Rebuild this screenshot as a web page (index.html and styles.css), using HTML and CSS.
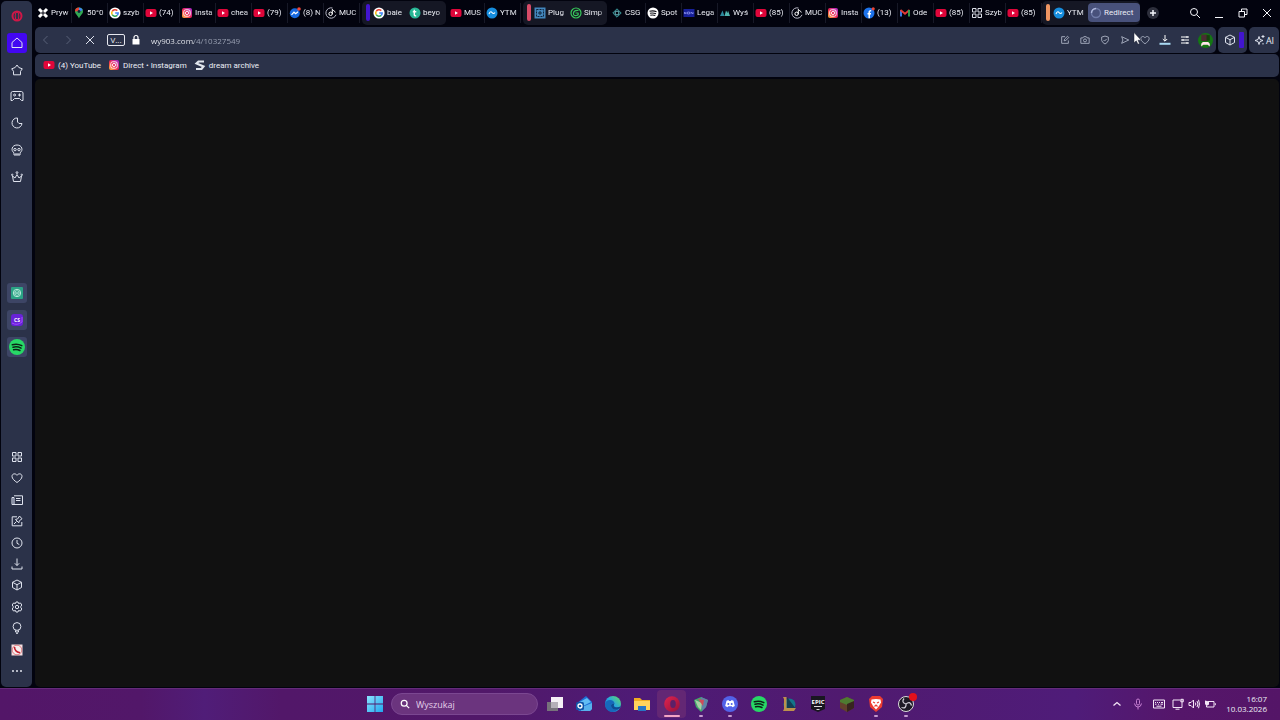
FILE: index.html
```html
<!DOCTYPE html>
<html lang="pl">
<head>
    <meta charset="UTF-8">
    <meta name="viewport" content="width=device-width, initial-scale=1.0">
    <title>Redirect</title>
    <link rel="stylesheet" href="styles.css">
</head>
<body>
    <!-- Shared icons -->
    <svg class="sprite" aria-hidden="true">
        <defs>
            <linearGradient id="insta-bg" x1="0" y1="1" x2="1" y2="0">
                <stop offset="0" stop-color="#ffc23c"/>
                <stop offset=".45" stop-color="#f0254f"/>
                <stop offset="1" stop-color="#a52bd8"/>
            </linearGradient>
            <linearGradient id="edge-bg" x1="0" y1="1" x2="1" y2="0">
                <stop offset="0" stop-color="#1565c8"/>
                <stop offset=".5" stop-color="#27a5e0"/>
                <stop offset="1" stop-color="#64e060"/>
            </linearGradient>
            <linearGradient id="opera-bg" x1="0" y1="0" x2="1" y2="1">
                <stop offset="0" stop-color="#e0244f"/>
                <stop offset="1" stop-color="#96103c"/>
            </linearGradient>
            <linearGradient id="win-bg" x1="0" y1="0" x2="1" y2="1">
                <stop offset="0" stop-color="#8be4ff"/>
                <stop offset="1" stop-color="#22a7ee"/>
            </linearGradient>
        </defs>
        <symbol id="youtube" viewBox="0 0 12 12">
            <rect x=".5" y="2" width="11" height="8" rx="2" fill="#e0063a"/>
            <path d="M5 4.3 8 6 5 7.7z" fill="#fff"/>
        </symbol>
        <symbol id="instagram" viewBox="0 0 12 12">
            <rect x="1" y="1" width="10" height="10" rx="2" fill="url(#insta-bg)"/>
            <rect x="2.8" y="2.8" width="6.4" height="6.4" rx="1.8" fill="none" stroke="#fff" stroke-width=".9"/>
            <circle cx="6" cy="6" r="1.6" fill="none" stroke="#fff" stroke-width=".9"/>
            <circle cx="8" cy="4" r=".5" fill="#fff"/>
        </symbol>
        <symbol id="google" viewBox="0 0 12 12">
            <circle cx="6" cy="6" r="5.6" fill="#fff"/>
            <path d="M8.3 3.6A3.3 3.3 0 0 0 3.2 4.3" fill="none" stroke="#ea4335" stroke-width="1.5"/>
            <path d="M3.2 4.3a3.3 3.3 0 0 0 0 3.4" fill="none" stroke="#fbbc05" stroke-width="1.5"/>
            <path d="M3.2 7.7a3.3 3.3 0 0 0 5 .7" fill="none" stroke="#34a853" stroke-width="1.5"/>
            <path d="M8.2 8.4A3.3 3.3 0 0 0 9.2 6H6.2" fill="none" stroke="#4285f4" stroke-width="1.5"/>
        </symbol>
        <symbol id="note" viewBox="0 0 12 12">
            <path d="M7.5 1A5.200 5.200 0 1 0 11 7.800" fill="none" stroke="#b9bac8" stroke-width="1"/>
            <circle cx="5.600" cy="6.800" r="1.700" fill="none" stroke="#fff" stroke-width="1"/>
            <path d="M7.300 7V2.300c.5 1.400 2.600 1.300 3 3.200" fill="none" stroke="#fff" stroke-width="1"/>
        </symbol>
        <symbol id="converter" viewBox="0 0 12 12">
            <circle cx="6" cy="6" r="5.5" fill="#168ddd"/>
            <path d="M3 7q1.500-3.500 3-1.500t3 0" fill="none" stroke="#fff" stroke-width="1.100"/>
        </symbol>
        <symbol id="spotify" viewBox="0 0 16 16">
            <circle cx="8" cy="8" r="8" fill="#27d866"/>
            <path d="M3.300 5.800q5-1.500 9.500.900M4 8.300q4.200-1.200 8 .900M4.600 10.700q3.500-.900 6.300.800" fill="none" stroke="#0b2316" stroke-width="1.500" stroke-linecap="round"/>
        </symbol>
        <symbol id="cube" viewBox="0 0 12 12">
            <path d="M6 1l4.500 2.300v5.200L6 11 1.500 8.500V3.300zM1.500 3.300 6 5.700l4.500-2.400M6 5.700V11"/>
        </symbol>
        <symbol id="heart" viewBox="0 0 12 12">
            <path d="M6 10.500C3.500 8.700 1 6.800 1 4.300 1 1.500 4.600 1 6 3.300 7.400 1 11 1.500 11 4.300c0 2.500-2.500 4.400-5 6.200z"/>
        </symbol>
        <symbol id="grid" viewBox="0 0 12 12">
            <path d="M1.500 1.500h3.500V5H1.500zM7 1.500h3.500V5H7zM1.500 7h3.500v3.500H1.500zM7 7h3.500v3.500H7z"/>
        </symbol>
        <symbol id="search" viewBox="0 0 12 12">
            <circle cx="5" cy="5" r="3.500"/><path d="M7.600 7.600 11 11"/>
        </symbol>
    </svg>

    <div class="browser">
        <!-- Sidebar -->
        <nav class="sidebar" aria-label="Pasek boczny">
            <div class="side-group side-top">
                <button class="side-btn" aria-label="Opera GX"><svg viewBox="0 0 12 12"><ellipse cx="6" cy="6" rx="4.500" ry="4.500" stroke="#cf1747" stroke-width="2"/><ellipse cx="6" cy="6" rx="1.800" ry="4" stroke="#cf1747"/></svg></button>
                <button class="side-btn current" aria-label="Start"><svg viewBox="0 0 12 12"><path d="M1 5.500 6 1l5 4.500V10.500H1z"/></svg></button>
                <button class="side-btn" aria-label="Kącik GX"><svg viewBox="0 0 12 12"><path d="M6 1l1.800 2.500L11.300 4.800 9.500 7.300v3.500h-7V7.300L.700 4.800l3.500-1.300z"/></svg></button>
                <button class="side-btn" aria-label="Gry"><svg class="wide" viewBox="0 0 14 12"><path d="M2.500 1.500h9l1.500 1v8h-1.500L9.500 8.500h-5L2.500 10.500H1v-8z"/><circle cx="4.600" cy="5" r="1"/><path d="M8 5h3M9.500 3.500v3"/></svg></button>
                <button class="side-btn" aria-label="GX Control"><svg viewBox="0 0 12 12"><path d="M6.500 1A5 5 0 1 0 11 6.500H8L6.500 5z"/></svg></button>
                <button class="side-btn" aria-label="GX Mods"><svg viewBox="0 0 12 12"><path d="M3 8.800C-.500 6.500.800 1 6 1s6.500 5.500 3 7.800V11H3zM5 9v2M7 9v2"/><circle cx="4" cy="5.600" r="1.200"/><circle cx="8" cy="5.600" r="1.200"/></svg></button>
                <button class="side-btn" aria-label="Korona"><svg viewBox="0 0 12 12"><path d="M1.500 5 2.500 10.500h7L10.500 5 8 7 6 3.500 4 7z"/><circle cx="1.200" cy="3.800" r=".700"/><circle cx="6" cy="1.600" r=".900"/><circle cx="10.800" cy="3.800" r=".700"/></svg></button>
            </div>
            <div class="side-group side-apps">
                <button class="side-btn app" aria-label="ChatGPT"><svg viewBox="0 0 12 12"><rect width="12" height="12" rx="1" fill="#2ba385" stroke="none"/><circle cx="6" cy="6" r="3.700" stroke="#b8eadb"/><path d="M6 3.500 8.200 4.800v2.500L6 8.500 3.800 7.300V4.800zM3.800 4.800 8.200 7.300M8.200 4.800 3.800 7.300" stroke="#b8eadb" stroke-width=".700"/></svg></button>
                <button class="side-btn app" aria-label="CS"><svg class="wide" viewBox="0 0 12 12"><rect width="12" height="12" rx="3" fill="#6822d8" stroke="none"/><path d="M1 9q5 3 10-1V3" stroke="#a44cff"/><text class="app-mark" x="6" y="8" text-anchor="middle">CS</text></svg></button>
                <button class="side-btn app" aria-label="Spotify"><svg class="full"><use href="#spotify"/></svg></button>
            </div>
            <div class="side-group side-bottom">
                <button class="side-btn" aria-label="Karty"><svg><use href="#grid"/></svg></button>
                <button class="side-btn" aria-label="Ulubione"><svg><use href="#heart"/></svg></button>
                <button class="side-btn" aria-label="Aktualności"><svg viewBox="0 0 12 12"><path d="M1 3.500h2v7H1zM3 1.800h8.500v8.700H1.500M5 4.500h4.500M5 6.500h4.500"/><path d="M.700 4h3v6h-3z" fill="#8d93a8" stroke="none"/></svg></button>
                <button class="side-btn" aria-label="Pinboardy"><svg viewBox="0 0 12 12"><path d="M6 1.800H1.200v9h9.600V7M3 9l2.500-2.500M4.500 4.500l3.300 3.300.500-2 2.700-2L8.500 1 6.800 3.800z"/></svg></button>
                <button class="side-btn" aria-label="Historia"><svg viewBox="0 0 12 12"><circle cx="6" cy="6" r="5"/><path d="M6 3v3.300L8.300 7.500"/></svg></button>
                <button class="side-btn" aria-label="Pobrane"><svg viewBox="0 0 12 12"><path d="M6 .500v7M3.800 5.300 6 7.500l2.200-2.200M1 8.500V11h10V8.500"/></svg></button>
                <button class="side-btn" aria-label="Rozszerzenia"><svg><use href="#cube"/></svg></button>
                <button class="side-btn" aria-label="Ustawienia"><svg viewBox="0 0 12 12"><path d="M5 1h2l.500 1.500L9.500 2l1.300 2-1 1.500v1l1 1.500-1.300 2-2-.500L7 11H5l-.500-1.500-2 .500-1.300-2 1-1.500v-1l-1-1.500 1.300-2 2 .500z"/><circle cx="6" cy="6" r="1.700"/></svg></button>
                <button class="side-btn" aria-label="Wskazówki"><svg viewBox="0 0 12 12"><circle cx="6" cy="4.500" r="3.900"/><path d="M4.500 8.300V10h3V8.300M5 11.300h2"/></svg></button>
                <button class="side-btn" aria-label="Telefon"><svg viewBox="0 0 12 12"><path d="M.500.500h11v11H.500z" fill="#f5dfe1" stroke="none"/><circle cx="6" cy="6" r="4.800" fill="#f6eeee" stroke="#d6525a" stroke-width=".700"/><path d="M3.500 3q0 4.500 5.500 5.800" stroke="#c6202e" stroke-width="1.600"/></svg></button>
                <button class="side-btn" aria-label="Więcej"><svg viewBox="0 0 12 12"><g fill="#e2e5ee" stroke="none"><circle cx="2" cy="6" r="1"/><circle cx="6" cy="6" r="1"/><circle cx="10" cy="6" r="1"/></g></svg></button>
            </div>
        </nav>

        <div class="main">
            <!-- Tab strip -->
            <div class="tabstrip">
                <button class="tab"><svg viewBox="0 0 12 12"><path d="M2 2l8 8M10 2l-8 8" stroke="#fff" stroke-width="3"/><path d="M6 4v4M4 6h4" stroke="#02030e"/></svg><span>Pryw</span></button>
                <button class="tab"><svg viewBox="0 0 12 12"><path d="M6 11.500C5 8.500 2 7 2 4.500a4 4 0 0 1 8 0C10 7 7 8.500 6 11.500z" fill="#31a853"/><path d="M2 4.500A4 4 0 0 1 6 .500V4z" fill="#e84335"/><path d="M6 .500a4 4 0 0 1 3.700 2.500L6 5z" fill="#4285f4"/><circle cx="6" cy="4.500" r="1.400" fill="#10223a"/></svg><span>50°0</span></button>
                <button class="tab"><svg><use href="#google"/></svg><span>szyb</span></button>
                <button class="tab"><svg><use href="#youtube"/></svg><span>(74)</span></button>
                <button class="tab"><svg><use href="#instagram"/></svg><span>Insta</span></button>
                <button class="tab"><svg><use href="#youtube"/></svg><span>chea</span></button>
                <button class="tab"><svg><use href="#youtube"/></svg><span>(79)</span></button>
                <button class="tab"><svg viewBox="0 0 12 12"><circle cx="5.800" cy="6.200" r="5" fill="#1769df"/><path d="M2.500 7.800 5 5.200l1.700 1.500L9 4.800" fill="none" stroke="#fff" stroke-width="1.200"/><circle cx="10" cy="2" r="1.800" fill="#ee4538"/></svg><span>(8) N</span></button>
                <button class="tab"><svg><use href="#note"/></svg><span>MUC</span></button>

                <div class="tab-group">
                    <i class="mark violet"></i>
                    <button class="tab"><svg><use href="#google"/></svg><span>baie</span></button>
                    <button class="tab"><svg viewBox="0 0 12 12"><circle cx="6" cy="6" r="5.500" fill="#28b695"/><path d="M5.300 2.800v5q0 1.200 1.900 1M3.800 4.700h3.500" fill="none" stroke="#fff" stroke-width="1.400"/></svg><span>beyo</span></button>
                </div>

                <button class="tab"><svg><use href="#youtube"/></svg><span>MUS</span></button>
                <button class="tab"><svg><use href="#converter"/></svg><span>YTM</span></button>

                <div class="tab-group">
                    <i class="mark pink"></i>
                    <button class="tab"><svg viewBox="0 0 12 12"><path d="M.500.500h11v11H.500z" fill="#4387bd"/><path d="M2.500 2.500h7v7h-7z" fill="none" stroke="#10243c" stroke-dasharray="2 1"/><path d="M6 4v4M4 6h4" stroke="#10243c"/></svg><span>Plug</span></button>
                    <button class="tab"><svg viewBox="0 0 12 12" fill="none" stroke="#38c75b" stroke-width="1.200"><circle cx="6" cy="6" r="5"/><path d="M8.500 3.500Q4 3 3.500 6t3 2.500Q9 8 8 6H5.500"/></svg><span>Simp</span></button>
                </div>

                <button class="tab"><svg viewBox="0 0 12 12" fill="none" stroke="#3b9da0"><path d="M6 1.800 10.200 6 6 10.200 1.800 6z"/><circle cx="6" cy="6" r="2" stroke="#77cbd1"/></svg><span>CSG</span></button>
                <button class="tab"><svg viewBox="0 0 12 12"><circle cx="6" cy="6" r="5.500" fill="#fff"/><path d="M2.500 4.300q4-1 7 .500M3 6.300q3-.800 6 .500M3.300 8.200q3-.600 5 .400" fill="none" stroke="#101018" stroke-width="1.100"/></svg><span>Spot</span></button>
                <button class="tab"><svg viewBox="0 0 12 12"><path d="M.500 2h11v8H.500z" fill="#172099"/><path d="M1.500 7V5l1.500 2V5M4.500 5h2v2h-2zM8 7V5l2 2V5" fill="none" stroke="#9098f0" stroke-width=".700"/></svg><span>Lega</span></button>
                <button class="tab"><svg viewBox="0 0 12 12"><path d="M1 9l2.500-5.500L5.500 9z" fill="#2c899d"/><path d="M5.500 9 7 3.500 8.500 6 9 3.500 11 9z" fill="#50b5af"/></svg><span>Wyś</span></button>
                <button class="tab"><svg><use href="#youtube"/></svg><span>(85)</span></button>
                <button class="tab"><svg><use href="#note"/></svg><span>MUC</span></button>
                <button class="tab"><svg><use href="#instagram"/></svg><span>Insta</span></button>
                <button class="tab"><svg viewBox="0 0 12 12"><circle cx="6" cy="6" r="5.500" fill="#1c72ea"/><path d="M6.200 11.300V5.200q0-1.700 2-1.500M4.500 6.800h3.500" fill="none" stroke="#fff" stroke-width="1.500"/><circle cx="10.200" cy="1.800" r="1.600" fill="#ee4538"/></svg><span>(13)</span></button>
                <button class="tab"><svg viewBox="0 0 12 12" fill="none" stroke-width="1.800"><path d="M2 9.500V3" stroke="#4285f4"/><path d="M1.500 3 6 6.800 10.500 3" stroke="#e43b35"/><path d="M10 9.500V3" stroke="#34a853"/></svg><span>Ode</span></button>
                <button class="tab"><svg><use href="#youtube"/></svg><span>(85)</span></button>
                <button class="tab line"><svg><use href="#grid"/></svg><span>Szyb</span></button>
                <button class="tab"><svg><use href="#youtube"/></svg><span>(85)</span></button>

                <div class="tab-group last">
                    <i class="mark orange"></i>
                    <button class="tab"><svg><use href="#converter"/></svg><span>YTM</span></button>
                    <button class="tab active"><svg viewBox="0 0 12 12" fill="none" stroke-width="1.400"><circle cx="6" cy="6" r="4.500" stroke="#6f7ba8"/><path d="M1.500 6A4.500 4.500 0 0 1 6 1.500" stroke="#aeb7dc"/></svg><span>Redirect</span></button>
                </div>
                <button class="new-tab" aria-label="Nowa karta"><svg viewBox="0 0 12 12"><path d="M6 3v6M3 6h6"/></svg></button>

                <div class="window-controls">
                    <button aria-label="Szukaj kart"><svg><use href="#search"/></svg></button>
                    <button aria-label="Minimalizuj"><svg viewBox="0 0 12 12"><path d="M2 10.500h8"/></svg></button>
                    <button aria-label="Przywróć"><svg viewBox="0 0 12 12"><path d="M2 4.500h5.500V10H2zM4.500 4.500V2H10v5.500H7.500"/></svg></button>
                    <button aria-label="Zamknij"><svg viewBox="0 0 12 12"><path d="M2 2l8 8M10 2l-8 8"/></svg></button>
                </div>
            </div>

            <!-- Address bar -->
            <div class="toolbar">
                <div class="address">
                    <button class="nav-btn off" aria-label="Wstecz"><svg viewBox="0 0 12 12"><path d="M7.500 2 3.500 6l4 4"/></svg></button>
                    <button class="nav-btn off" aria-label="Dalej"><svg viewBox="0 0 12 12"><path d="M4.500 2l4 4-4 4"/></svg></button>
                    <button class="nav-btn" aria-label="Zatrzymaj"><svg viewBox="0 0 12 12"><path d="M2 2l8 8M10 2l-8 8"/></svg></button>
                    <button class="vpn">V...</button>
                    <svg class="lock" viewBox="0 0 12 12"><path d="M2.500 5h7v5.500h-7z" fill="#fff"/><path d="M4 5V3.500a2 2 0 0 1 4 0V5" fill="none" stroke="#fff" stroke-width="1.200"/></svg>
                    <input class="url" type="text" value="wy903.com/4/10327549" aria-label="Adres">
                    <div class="tools">
                        <button aria-label="Edytuj"><svg viewBox="0 0 12 12"><path d="M6 2H2v8h8V6.500M5 7l.500-2L9 1.500 10.500 3 7 6.500z"/></svg></button>
                        <button aria-label="Zrzut ekranu"><svg viewBox="0 0 12 12"><path d="M1 3.500h2.500l1-1.500h3l1 1.500H11v6.500H1z"/><circle cx="6" cy="6.500" r="1.800"/></svg></button>
                        <button aria-label="Ochrona"><svg viewBox="0 0 12 12"><path d="M2 2.500 6 1.300l4 1.200v4Q9.500 9 6 10.800 2.500 9 2 6.500zM4.200 6l1.300 1.300L8 4.700"/></svg></button>
                        <button aria-label="Wyślij"><svg viewBox="0 0 12 12"><path d="M2 2l8.500 4L2 10l1.500-4z"/></svg></button>
                        <button aria-label="Ulubione"><svg><use href="#heart"/></svg></button>
                        <button class="bright" aria-label="Pobrane"><svg viewBox="0 0 12 12"><path d="M6 1v6M3.800 5 6 7.200 8.200 5"/><path d="M.500 9.800h11" stroke="#a9d8f2" stroke-width="2"/></svg></button>
                        <button class="bright" aria-label="Ustawienia"><svg viewBox="0 0 12 12"><path d="M2 3h8M2 6h8M2 9h8M8 2v2M4 5v2M8 8v2"/></svg></button>
                        <button aria-label="Profil"><svg class="avatar" viewBox="0 0 14 14"><circle cx="7" cy="7" r="7" fill="#147713"/><path d="M3 1.500h6v6H3z" fill="#4b2d32"/><path d="M8 2h3v5H8z" fill="#16410f"/><path d="M3 12.500V10L4.500 8.500h5L11 10v2.500L9 11H5z" fill="#ffe4ec"/></svg></button>
                    </div>
                </div>
                <div class="extensions">
                    <button aria-label="Rozszerzenia"><svg><use href="#cube"/></svg></button>
                    <i></i>
                </div>
                <button class="ai"><svg viewBox="0 0 12 12"><path d="M5 2.500 6 5.500 9 6.500 6 7.500 5 10.500 4 7.500 1 6.500 4 5.500zM9 1v3M7.500 2.500h3M9 9v1.500"/></svg>AI</button>
                <svg class="cursor" viewBox="0 0 9 13"><path d="M1 .500v10.300l2.300-2 1.700 3.500 1.500-.700L5 8.200h3.200z" fill="#fff" stroke="#1c2032" stroke-width=".500"/></svg>
            </div>

            <!-- Bookmarks -->
            <div class="bookmarks">
                <a href="#"><svg><use href="#youtube"/></svg>(4) YouTube</a>
                <a href="#"><svg><use href="#instagram"/></svg>Direct • Instagram</a>
                <a href="#"><svg viewBox="0 0 12 12"><path d="M10 2.500H4.500L2.500 4.500l7 3-2 2.500H2" fill="none" stroke="#e1e6ed" stroke-width="2.200"/></svg>dream archive</a>
            </div>

            <main class="page"></main>
        </div>
    </div>

    <!-- Windows taskbar -->
    <footer class="taskbar">
        <div class="task-center">
            <button class="task start" aria-label="Start"><svg viewBox="0 0 16 16"><path d="M0 0h7.600v7.600H0zM8.400 0H16v7.600H8.400zM0 8.400h7.600V16H0zM8.400 8.400H16V16H8.400z" fill="url(#win-bg)"/></svg></button>
            <label class="task-search"><svg><use href="#search"/></svg><input type="text" placeholder="Wyszukaj" aria-label="Wyszukaj"></label>
            <div class="task-apps">
                <button class="task" aria-label="Widok zadań"><svg viewBox="0 0 16 16"><path d="M4 1h12v11H4z" fill="#f5f0f5"/><path d="M0 6h11v9H0z" fill="#77727b"/><path d="M4 6h7v6H4z" fill="#b5afb8"/></svg></button>
                <button class="task" aria-label="Outlook"><svg viewBox="0 0 16 16"><path d="M1 7 10 0l6 6v7l-2 2H3l-2-2z" fill="#1c70d5"/><path d="M2 7l9-5 4 4-8 4z" fill="#62bdf4"/><path d="M6 11l10-4v6l-2 2H5z" fill="#57b1ec"/><rect y="6" width="8" height="8" rx="1.500" fill="#1256a7"/><circle cx="4" cy="10" r="2" fill="none" stroke="#fff" stroke-width="1.300"/></svg></button>
                <button class="task" aria-label="Edge"><svg viewBox="0 0 16 16"><circle cx="8" cy="8" r="8" fill="url(#edge-bg)"/><path d="M0 8q1-4 5-4 4 0 4.500 3.500Q6 7 6 10q1 4.500 7 3.500-3 3-7 2.300Q0 14 0 8z" fill="#1668bb"/><path d="M9.500 7.500Q8 10 10 11q3 1 6-1-1 3-3 3.500-6 1-7-3.500 0-3 3.500-2.500z" fill="#0f4b92"/></svg></button>
                <button class="task" aria-label="Eksplorator plików"><svg viewBox="0 0 16 16"><path d="M0 2h6l2 2h8v10H0z" fill="#f0ad22"/><path d="M0 5h16v9H0z" fill="#ffd35c"/><path d="M4 10h8v5H4z" fill="#2876c5"/></svg></button>
                <button class="task focused" aria-label="Opera GX"><svg viewBox="0 0 16 16"><circle cx="8" cy="8" r="7.800" fill="url(#opera-bg)"/><ellipse cx="9" cy="8" rx="2.800" ry="4" fill="#5c2068"/></svg></button>
                <button class="task running" aria-label="Przeglądarka"><svg viewBox="0 0 16 16"><path d="M1 4 8 1l7 3-2 7-5 5-5-5z" fill="#43a86d"/><path d="M8 1l7 3-2 7-4 4-1-8z" fill="#6182a8"/><path d="M2 4l7 3-1 7-3-3z" fill="#a9cfa5"/><path d="M5 3l6 1-1 6z" fill="#d04c5a"/></svg></button>
                <button class="task running" aria-label="Discord"><svg viewBox="0 0 16 16"><circle cx="8" cy="8" r="8" fill="#5262e8"/><path d="M4.500 4.800 6.500 4l.500 1h2l.500-1 2 .800 1.300 5.200-2.300 1.300-.800-1H6.300l-.800 1L3.200 10z" fill="#fff"/><circle cx="6.300" cy="8" r="1" fill="#5262e8"/><circle cx="9.700" cy="8" r="1" fill="#5262e8"/></svg></button>
                <button class="task" aria-label="Spotify"><svg><use href="#spotify"/></svg></button>
                <button class="task" aria-label="League of Legends"><svg viewBox="0 0 16 16"><circle cx="8.500" cy="8.500" r="6" fill="#13758a"/><path d="M6 1l9 12H6z" fill="#133e54"/><path d="M2 1h3.500v11H15l-2 3H2l1-2V3z" fill="#bd914c"/></svg></button>
                <button class="task" aria-label="Epic Games"><svg viewBox="0 0 16 16"><path d="M1 0h14v13l-7 3-7-3z" fill="#191720"/><text class="epic" x="8" y="8" text-anchor="middle">EPIC</text><path d="M4 10.500h8M6.500 13.500h3" stroke="#ddd" stroke-width="1"/></svg></button>
                <button class="task" aria-label="Minecraft"><svg viewBox="0 0 16 16"><path d="M8 1l7 3v8l-7 4-7-4V4z" fill="#63402c"/><path d="M8 1l7 3v2L8 9 1 6V4z" fill="#4e7b31"/><path d="M8 8l7-3v7l-7 4z" fill="#38241f"/></svg></button>
                <button class="task running" aria-label="Brave"><svg viewBox="0 0 16 16"><path d="M4 0h8l3 3-1 8-6 5-6-5-1-8z" fill="#ec3c31"/><path d="M3.500 3.500 8 3l4.500.500.500 3-2 3.500L8 13.500 5 10 3 6.500z" fill="#fff"/><path d="M5 6l2 1M11 6 9 7M6.500 10.500 8 9l1.500 1.500" stroke="#ec3c31" stroke-width="1.200" fill="none"/></svg></button>
                <button class="task running" aria-label="OBS"><svg viewBox="0 0 16 16"><circle cx="8" cy="8" r="7.500" fill="#1e1a26" stroke="#ddd"/><path d="M8 8Q3 6.500 6 2.500M8 8q4-3.500 5.500 1.500M8 8q.500 5-4.500 3.500" fill="none" stroke="#cfcbd5" stroke-width="1.300"/></svg><i class="rec"></i></button>
            </div>
        </div>
        <div class="tray">
            <button aria-label="Ukryte ikony"><svg viewBox="0 0 12 12"><path d="M2.500 7.500 6 4.500l3.500 3" stroke-width="1.300"/></svg></button>
            <button class="mic" aria-label="Mikrofon"><svg viewBox="0 0 12 12"><rect x="4.500" y="1" width="3" height="6" rx="1.500"/><path d="M2.500 5.500Q3 9 6 9t3.500-3.500M6 9v2.500"/></svg></button>
            <button aria-label="Klawiatura"><svg viewBox="0 0 12 12"><path d="M.500 2h11v8H.500zM2 4.500h1M4 4.500h1M6 4.500h1M8 4.500h2M2 6.200h1.500M5 6.200h1M7.500 6.200h2.500M3.500 8.200h5"/></svg></button>
            <button class="status" aria-label="Sieć, głośność, bateria">
                <svg viewBox="0 0 12 12"><path d="M8 2H1v7.500h9V7M3.500 11.200h4M10 1v6M8.800 1.300h2.500v2.500H8.800z"/></svg>
                <svg viewBox="0 0 12 12"><path d="M1 4.500h2L5.500 2v8L3 7.500H1zM7.300 4.500q1 1.500 0 3M9 3q2 3 0 6M10.500 1.800q2 4.200 0 8.400"/></svg>
                <svg viewBox="0 0 12 12"><path d="M4 3.500h6v5.500H2.500V7.500M11.300 5.200v2"/><path d="M1 2.500l4 1v3L2.500 8 1 6z" fill="#f4e6f7" stroke="none"/></svg>
            </button>
            <button class="clock"><span>16:07</span><span>10.03.2026</span></button>
        </div>
    </footer>
</body>
</html>
```
FILE: styles.css
```css
* {
    box-sizing: border-box;
}

body {
    margin: 0;
    height: 100vh;
    display: flex;
    flex-direction: column;
    overflow: hidden;
    background-color: #02030e;
    color: #eceef5;
    font-family: "Open Sans", "Noto Sans", sans-serif;
    font-size: 8px;
}

button, input {
    margin: 0;
    padding: 0;
    border: none;
    background: none;
    color: inherit;
    font: inherit;
}

button {
    display: flex;
    align-items: center;
    justify-content: center;
}

svg {
    width: 12px;
    height: 12px;
    flex: none;
    display: block;
}

.sprite {
    position: absolute;
    width: 0;
    height: 0;
}

.browser {
    flex: 1;
    min-height: 0;
    display: flex;
}

/* Sidebar */
.sidebar {
    width: 31px;
    margin: 1px 3px 1px 1px;
    padding: 2px 0 5px;
    border-radius: 5px;
    background-color: #2b3249;
    display: flex;
    flex-direction: column;
    justify-content: space-between;
}

.side-group {
    display: flex;
    flex-direction: column;
    align-items: center;
    justify-content: space-around;
}

.side-top {
    height: 187px;
    margin-bottom: 4px;
}

.side-apps {
    height: 80px;
}

.side-bottom {
    height: 236px;
}

.side-btn {
    width: 20px;
    height: 20px;
    border-radius: 3px;
}

.side-btn svg {
    fill: none;
    stroke: #dfe3ee;
    stroke-width: 1;
}

.side-btn .wide {
    width: 14px;
}

.side-btn .full {
    width: 16px;
    height: 16px;
    stroke: none;
}

.side-btn.current {
    background-color: #4307f2;
}

.side-btn.app {
    background-color: #3d4565;
}

.app-mark {
    fill: #fff;
    stroke: none;
    font-size: 5px;
    font-weight: bold;
}

.main {
    flex: 1;
    min-width: 0;
    display: flex;
    flex-direction: column;
}

/* Tabs */
.tabstrip {
    height: 27px;
    padding: 0 1px 2px;
    display: flex;
    align-items: center;
    font-family: Roboto, "Open Sans", sans-serif;
}

.tab {
    width: 36px;
    height: 20px;
    padding-left: 1px;
    border-right: 1px solid #171927;
    justify-content: flex-start;
    gap: 2px;
}

.tab span {
    flex: 1;
    text-align: left;
    white-space: nowrap;
    mask-image: linear-gradient(90deg, #000 70%, #0006);
}

.tab.line svg {
    fill: none;
    stroke: #dcdfe8;
}

.tab-group {
    height: 24px;
    margin: 0 3px 0 2px;
    padding: 0 2px 0 4px;
    border-radius: 5px;
    background-color: #151724;
    display: flex;
    align-items: center;
}

.tab-group .tab {
    border-right-color: transparent;
}

.tab-group.last {
    margin: 0 4px 0 0;
    padding-right: 0;
}

.mark {
    width: 4px;
    height: 17px;
    margin-right: 2px;
    border-radius: 2px;
}

.violet {
    background-color: #4215cf;
}

.pink {
    background-color: #d84b68;
}

.orange {
    background-color: #ee9562;
}

.tab.active {
    width: 52px;
    height: 19px;
    padding-left: 2px;
    border-radius: 4px;
    background-color: #48517b;
}

.tab.active span {
    mask-image: none;
}

.new-tab {
    width: 12px;
    height: 12px;
    margin-left: 3px;
    border-radius: 6px;
    background-color: #2d2f3c;
}

.new-tab svg, .window-controls svg {
    fill: none;
    stroke: #f5f6fa;
}

.new-tab svg {
    stroke-width: 1.5;
}

.window-controls {
    margin-left: auto;
    display: flex;
}

.window-controls button {
    width: 24px;
    height: 20px;
}

/* Address bar */
.toolbar {
    position: relative;
    height: 26px;
    margin: 0 1px 1px 0;
    display: flex;
    gap: 2px;
}

.address, .extensions, .ai {
    border-radius: 5px;
    background-color: #2b3249;
}

.address {
    flex: 1;
    padding-right: 1px;
    display: flex;
    align-items: center;
}

.toolbar svg {
    fill: none;
    stroke: #dfe3ee;
}

.nav-btn {
    width: 22px;
    height: 22px;
}

.toolbar .off svg {
    stroke: #596178;
}

.vpn {
    width: 18px;
    height: 12px;
    margin: 0 5px 0 6px;
    border: 1px solid #e6e8ef;
    border-radius: 2px;
    line-height: 8px;
}

.toolbar .lock {
    stroke: none;
}

.url {
    flex: 1;
    min-width: 0;
    margin-left: 9px;
    outline: none;
    color: transparent;
    background: linear-gradient(90deg, #f1f3f8 43px, #a0a7b9 43px);
    -webkit-background-clip: text;
    background-clip: text;
}

.tools {
    display: flex;
}

.tools button {
    width: 20px;
    height: 22px;
}

.tools svg {
    width: 10px;
    height: 10px;
    stroke: #b5bccd;
}

.tools .bright svg {
    width: 12px;
    height: 12px;
    stroke: #fff;
}

.tools .avatar {
    width: 15px;
    height: 15px;
    stroke: none;
}

.extensions {
    width: 29px;
    padding: 0 3px 0 6px;
    display: flex;
    align-items: center;
    justify-content: space-between;
}

.extensions i {
    width: 5px;
    height: 16px;
    border-radius: 1px;
    background-color: #4215cf;
}

.ai {
    width: 30px;
    font-size: 9px;
}

.cursor {
    position: absolute;
    top: 5px;
    right: 137px;
    width: 9px;
    height: 13px;
}

/* Bookmarks */
.bookmarks {
    height: 23px;
    margin-right: 1px;
    padding: 0 8px 1px;
    border-radius: 5px;
    background-color: #2b3249;
    display: flex;
    align-items: center;
    gap: 7px;
    font-family: Roboto, "Open Sans", sans-serif;
}

.bookmarks a {
    display: flex;
    align-items: center;
    gap: 3px;
    color: inherit;
    text-decoration: none;
}

.page {
    flex: 1;
    margin: 2px 1px 1px 0;
    border-radius: 5px;
    background-color: #111;
}

/* Taskbar */
.taskbar {
    height: 32px;
    padding-bottom: 1px;
    border-top: 1px solid #652b79;
    background: linear-gradient(90deg, #531668 0%, #521769 11%, #501d78 16%, #521769 22%, #511869 38%, #4e1b76 50%, #501a6f 66%, #4f1c79 84%, #55166a 92%, #541567 100%);
    display: grid;
    grid-template-columns: 1fr auto 1fr;
    align-items: center;
}

.task-center {
    grid-column: 2;
    display: flex;
    align-items: center;
}

.task {
    position: relative;
    width: 29px;
    height: 28px;
    border-radius: 4px;
}

.task svg {
    width: 16px;
    height: 16px;
}

.task-apps {
    width: 380px;
    display: flex;
    justify-content: space-between;
}

.task-search {
    width: 147px;
    height: 22px;
    margin: 0 2px;
    padding: 0 8px;
    border: 1px solid #7b4791;
    border-radius: 11px;
    background-color: #6b347e;
    display: flex;
    align-items: center;
    gap: 6px;
}

.task-search svg {
    width: 10px;
    height: 10px;
    fill: none;
    stroke: #fff;
    stroke-width: 1.5;
}

.task-search input {
    flex: 1;
    min-width: 0;
    outline: none;
    font-size: 9px;
}

.task-search input::placeholder {
    color: #e3cfe9;
}

.task.focused {
    background-color: #632774;
}

.focused::after, .running::after {
    content: "";
    position: absolute;
    bottom: 1px;
    left: 50%;
    width: 4px;
    height: 2px;
    border-radius: 1px;
    background-color: #c49bd0;
    transform: translateX(-50%);
}

.focused::after {
    width: 16px;
    background-color: #f3a4c5;
}

.rec {
    position: absolute;
    top: 3px;
    right: 3px;
    width: 8px;
    height: 8px;
    border-radius: 50%;
    background-color: #e4101c;
}

.epic {
    fill: #fff;
    font-size: 6px;
    font-weight: bold;
}

.tray {
    padding-right: 13px;
    display: flex;
    align-items: center;
    justify-content: flex-end;
}

.tray button {
    width: 21px;
    height: 24px;
}

.tray svg {
    fill: none;
    stroke: #f4e6f7;
}

.tray .mic svg {
    stroke: #c67fd2;
}

.tray .status {
    width: 50px;
    gap: 4px;
}

.tray .clock {
    width: 46px;
    margin-left: 2px;
    flex-direction: column;
    align-items: flex-end;
    line-height: 10px;
}
```
